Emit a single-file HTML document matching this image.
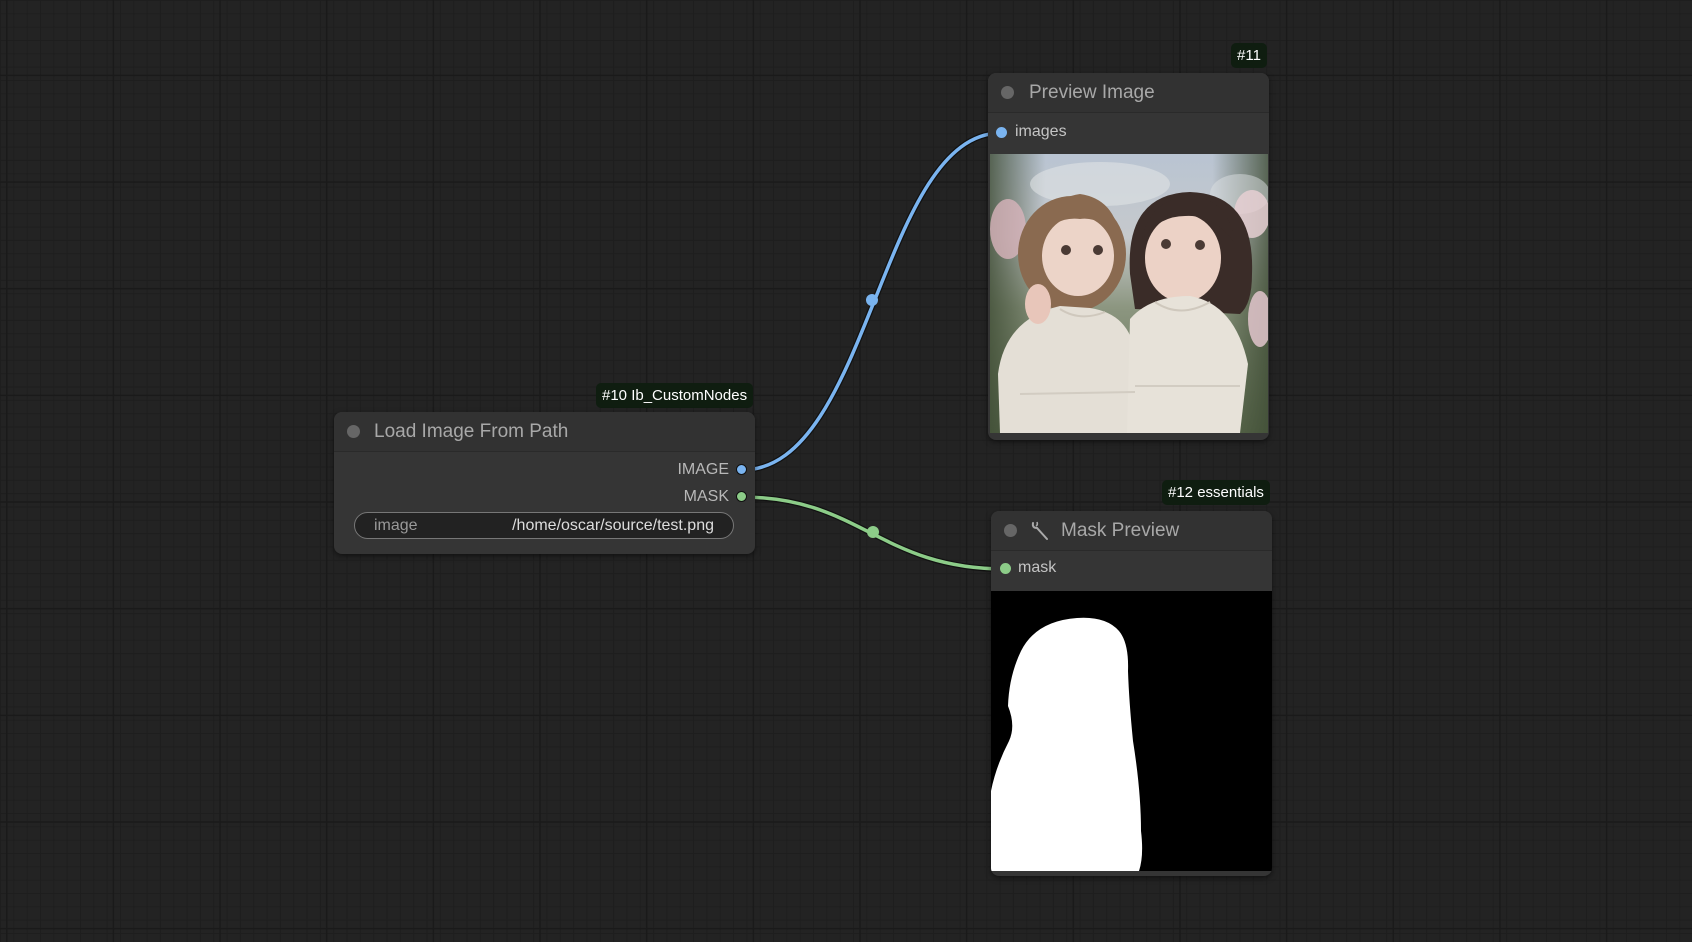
<!DOCTYPE html>
<html><head><meta charset="utf-8"><style>
*{margin:0;padding:0;box-sizing:border-box}
body{width:1692px;height:942px;overflow:hidden;position:relative;font-family:"Liberation Sans",sans-serif;
background-color:#232323;
background-image:
linear-gradient(to right,#1a1a1a 1.5px,transparent 1.5px),
linear-gradient(to bottom,#1a1a1a 1.5px,transparent 1.5px),
linear-gradient(to right,#1e1e1e 1px,transparent 1px),
linear-gradient(to bottom,#1e1e1e 1px,transparent 1px);
background-size:106.67px 106.67px,106.67px 106.67px,13.33px 13.33px,13.33px 13.33px;
background-position:6px 0,0 -32px,0 0,0 0;}
.node{position:absolute;background:#353535;border-radius:8px;box-shadow:0 2px 6px rgba(0,0,0,.5);overflow:hidden}
.title{position:absolute;left:0;right:0;top:0;background:#323232;border-bottom:1px solid #2a2a2a;color:#a8a8a8;font-size:19px;}
.title .d{position:absolute;left:13px;width:13px;height:13px;border-radius:50%;background:#666}
.title span{position:absolute}
.lbl{position:absolute;color:#c4c4c4;font-size:16px}
.dot{position:absolute;width:11px;height:11px;border-radius:50%;border:1px solid #111}
.badge{position:absolute;background:#0f1d10;color:#fff;font-size:15px;border-radius:5px;line-height:25px;padding:0 6px}
</style></head><body>
<svg width="1692" height="942" style="position:absolute;left:0;top:0">
<path d="M742 470 C870 470 880 133 1001 133" fill="none" stroke="#111" stroke-width="6"/>
<path d="M742 470 C870 470 880 133 1001 133" fill="none" stroke="#7ab4f0" stroke-width="3.5"/>
<path d="M742 497 C860 497 880 569 1005 569" fill="none" stroke="#111" stroke-width="6"/>
<path d="M742 497 C860 497 880 569 1005 569" fill="none" stroke="#8ccc88" stroke-width="3.5"/>
<circle cx="872" cy="300" r="6" fill="#7ab4f0"/>
<circle cx="873" cy="532" r="6" fill="#8ccc88"/>
</svg>

<div class="badge" style="left:596px;top:383px">#10 Ib_CustomNodes</div>
<div class="node" style="left:334px;top:412px;width:421px;height:142px">
 <div class="title" style="height:40px"><div class="d" style="top:13px"></div><span style="left:40px;top:9px">Load Image From Path</span></div>
 <div class="lbl" style="right:26px;top:49px;color:#b8b8b8">IMAGE</div>
 <div class="lbl" style="right:26px;top:76px;color:#b8b8b8">MASK</div>
 <div class="dot" style="left:402px;top:52px;background:#7ab4f0"></div>
 <div class="dot" style="left:402px;top:79px;background:#8ccc88"></div>
 <div style="position:absolute;left:20px;top:100px;width:380px;height:27px;border:1px solid #777;border-radius:14px;background:#222">
  <span style="position:absolute;left:19px;top:4px;color:#999;font-size:16px">image</span>
  <span style="position:absolute;right:19px;top:4px;color:#ddd;font-size:16px">/home/oscar/source/test.png</span>
 </div>
</div>

<div class="badge" style="left:1231px;top:43px">#11</div>
<div class="node" style="left:988px;top:73px;width:281px;height:367px">
 <div class="title" style="height:40px"><div class="d" style="top:13px"></div><span style="left:41px;top:9px">Preview Image</span></div>
 <div class="dot" style="left:8px;top:54px;background:#7ab4f0;border-color:#7ab4f0"></div>
 <div class="lbl" style="left:27px;top:50px">images</div>
 <svg style="position:absolute;left:2px;top:81px" width="278" height="279" viewBox="0 0 278 279">
  <defs><linearGradient id="sky" x1="0" y1="0" x2="0" y2="1"><stop offset="0" stop-color="#b9c4d2"/><stop offset=".3" stop-color="#c6c9cc"/><stop offset=".55" stop-color="#8c9680"/><stop offset="1" stop-color="#5e6c50"/></linearGradient>
  <linearGradient id="side" x1="0" y1="0" x2="1" y2="0"><stop offset="0" stop-color="#3e4c34" stop-opacity=".8"/><stop offset=".2" stop-color="#3e4c34" stop-opacity="0"/><stop offset=".8" stop-color="#3e4c34" stop-opacity="0"/><stop offset="1" stop-color="#3e4c34" stop-opacity=".8"/></linearGradient></defs>
  <rect width="278" height="279" fill="url(#sky)"/>
  <rect width="278" height="279" fill="url(#side)"/>
  <ellipse cx="110" cy="30" rx="70" ry="22" fill="#e0e2e4" opacity=".6"/>
  <ellipse cx="250" cy="40" rx="30" ry="20" fill="#dcdfe2" opacity=".5"/>
  <ellipse cx="18" cy="75" rx="18" ry="30" fill="#d8b4bc" opacity=".8"/>
  <ellipse cx="262" cy="60" rx="18" ry="24" fill="#e6cfd2" opacity=".85"/>
  <ellipse cx="270" cy="165" rx="12" ry="28" fill="#e2c6cc" opacity=".85"/>
  <ellipse cx="82" cy="100" rx="54" ry="58" fill="#8a6a50"/>
  <path d="M140 120 Q135 40 200 38 Q265 40 262 120 Q262 150 250 160 L145 155Z" fill="#3a2c28"/>
  <ellipse cx="88" cy="102" rx="36" ry="40" fill="#ecd4c8"/>
  <ellipse cx="193" cy="104" rx="38" ry="44" fill="#ecd2c6"/>
  <path d="M50 85 Q55 45 90 40 Q125 45 130 85 Q110 62 90 65 Q65 62 50 85Z" fill="#8a6a50"/>
  <path d="M152 85 Q160 45 200 42 Q240 45 245 90 Q225 60 195 62 Q170 62 152 85Z" fill="#3a2c28"/>
  <circle cx="76" cy="96" r="5" fill="#4a3a34"/><circle cx="108" cy="96" r="5" fill="#4a3a34"/>
  <circle cx="176" cy="90" r="5" fill="#4a3a34"/><circle cx="210" cy="91" r="5" fill="#4a3a34"/>
  <path d="M10 279 L8 220 Q15 165 70 152 L100 154 Q140 160 145 200 L145 279Z" fill="#e4dfd6"/>
  <path d="M137 279 L140 165 Q160 142 200 142 Q245 150 258 210 L250 279Z" fill="#e7e2d9"/>
  <path d="M70 155 Q90 168 115 158" fill="none" stroke="#cfc8bd" stroke-width="2"/>
  <path d="M165 148 Q190 165 220 148" fill="none" stroke="#cfc8bd" stroke-width="2"/>
  <path d="M30 240 L145 238 M145 232 L250 232" stroke="#d2ccc2" stroke-width="2"/>
  <ellipse cx="48" cy="150" rx="13" ry="20" fill="#e8c6ba"/>
 </svg>
</div>

<div class="badge" style="left:1162px;top:480px">#12 essentials</div>
<div class="node" style="left:991px;top:511px;width:281px;height:365px">
 <div class="title" style="height:40px"><div class="d" style="top:13px"></div>
  <svg style="position:absolute;left:39px;top:9px" width="22" height="22" viewBox="0 0 22 22"><path d="M3 3 Q2 8 7 8 L17 19" fill="none" stroke="#aaa" stroke-width="2" stroke-linecap="round"/><path d="M7 2 Q8 5 6 6" fill="none" stroke="#aaa" stroke-width="1.6"/></svg>
  <span style="left:70px;top:9px">Mask Preview</span></div>
 <div class="dot" style="left:9px;top:52px;background:#8ccc88;border-color:#8ccc88"></div>
 <div class="lbl" style="left:27px;top:48px">mask</div>
 <svg style="position:absolute;left:0;top:80px" width="281" height="280" viewBox="0 0 281 280">
  <rect width="281" height="280" fill="#000"/>
  <path d="M86 27 Q115 25 128 40 Q138 52 137 80 Q138 110 142 150 Q150 200 150 240 Q153 265 148 280 L0 280 L0 200 Q5 175 18 150 Q25 135 17 115 Q18 85 30 60 Q45 30 86 27Z" fill="#fff"/>
 </svg>
</div>
</body></html>
